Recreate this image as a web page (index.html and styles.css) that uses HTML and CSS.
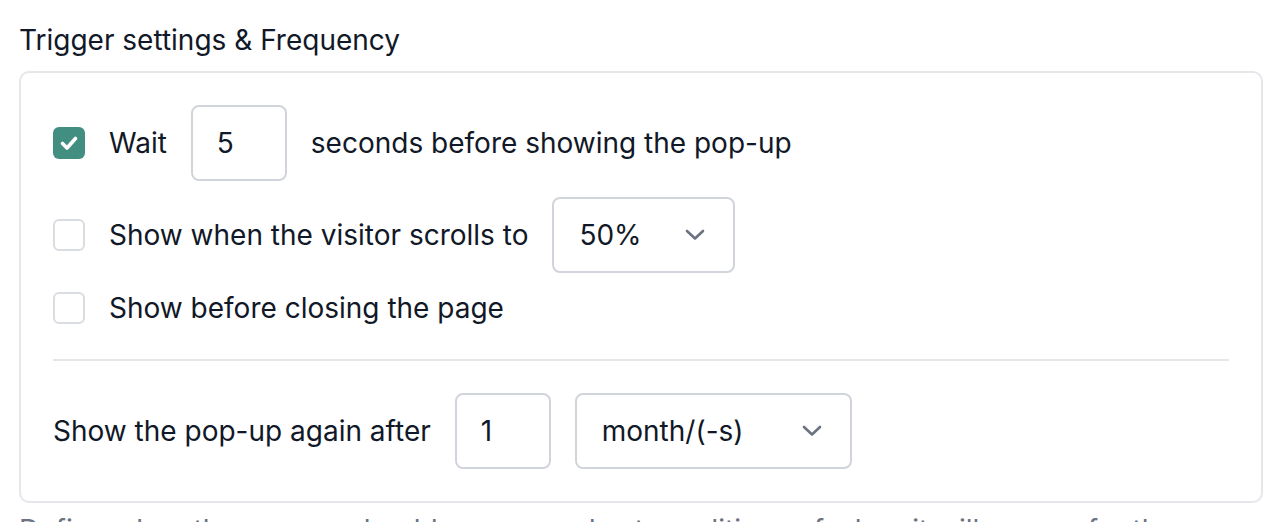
FILE: index.html
```html
<!DOCTYPE html>
<html>
<head>
<meta charset="utf-8">
<link rel="stylesheet" href="styles.css">
</head>
<body>
<div class="page">
  <h2 class="title">Trigger settings &amp; Frequency</h2>
  <div class="card">
    <div class="row row-tall">
      <span class="checkbox checked">
        <svg width="32" height="32" viewBox="0 0 32 32"><path d="M9.5 16.5 L14 21 L22.5 11.5" fill="none" stroke="#fff" stroke-width="3.6" stroke-linecap="round" stroke-linejoin="round"/></svg>
      </span>
      <span class="label">Wait</span>
      <span class="input">5</span>
      <span class="label">seconds before showing the pop-up</span>
    </div>
    <div class="row row-tall">
      <span class="checkbox"></span>
      <span class="label">Show when the visitor scrolls to</span>
      <span class="select select-pct"><span>50%</span>
        <svg class="chev" width="20" height="12" viewBox="0 0 20 12"><path d="M2 2 L10 9.5 L18 2" fill="none" stroke="#6b7280" stroke-width="2.6" stroke-linecap="round" stroke-linejoin="round"/></svg>
      </span>
    </div>
    <div class="row row-short">
      <span class="checkbox"></span>
      <span class="label">Show before closing the page</span>
    </div>
    <div class="divider"></div>
    <div class="row row-tall">
      <span class="label">Show the pop-up again after</span>
      <span class="input">1</span>
      <span class="select select-month"><span>month/(-s)</span>
        <svg class="chev" width="20" height="12" viewBox="0 0 20 12"><path d="M2 2 L10 9.5 L18 2" fill="none" stroke="#6b7280" stroke-width="2.6" stroke-linecap="round" stroke-linejoin="round"/></svg>
      </span>
    </div>
  </div>
  <p class="desc">Define when the pop-up should appear and set conditions of when it will appear for the user.</p>
</div>
</body>
</html>
```

FILE: styles.css
```css
* { box-sizing: border-box; }
html, body { margin: 0; padding: 0; background: #ffffff; overflow: hidden; }
body {
  font-family: Inter, "Noto Sans", sans-serif;
  color: #111827;
  font-size: 28px;
  line-height: 40px;
}
.page {
  padding: 20px 0 0 19px;
  width: 1263px;
}
.title {
  margin: 0 0 11px 0;
  font-size: 28px;
  font-weight: 400;
  line-height: 40px;
  color: #111827;
}
.card {
  border: 2px solid #e5e7eb;
  border-radius: 10px;
  padding: 32px;
  display: flex;
  flex-direction: column;
  gap: 16px;
}
.row {
  display: flex;
  align-items: center;
  gap: 24px;
}
.row-tall { height: 76px; }
.row-short { height: 38px; }
.checkbox {
  width: 32px;
  height: 32px;
  flex: none;
  border: 2px solid #d9dce1;
  border-radius: 6px;
  background: #fff;
  display: flex;
}
.checkbox.checked {
  background: #428f82;
  border: none;
}
.label { white-space: nowrap; }
.input {
  width: 96px;
  height: 76px;
  flex: none;
  border: 2px solid #d1d5db;
  border-radius: 8px;
  padding: 0 24px;
  display: flex;
  align-items: center;
}
.select {
  height: 76px;
  flex: none;
  border: 2px solid #d1d5db;
  border-radius: 8px;
  padding: 0 28px 0 25px;
  display: flex;
  align-items: center;
  justify-content: space-between;
}
.select-pct { width: 183px; }
.select-month { width: 277px; }
.chev { display: block; }
.divider {
  height: 2px;
  background: #e5e7eb;
  margin: 16px 0;
}
.desc {
  margin: 7px 0 0 0;
  color: #6b7280;
  white-space: nowrap;
}
```
